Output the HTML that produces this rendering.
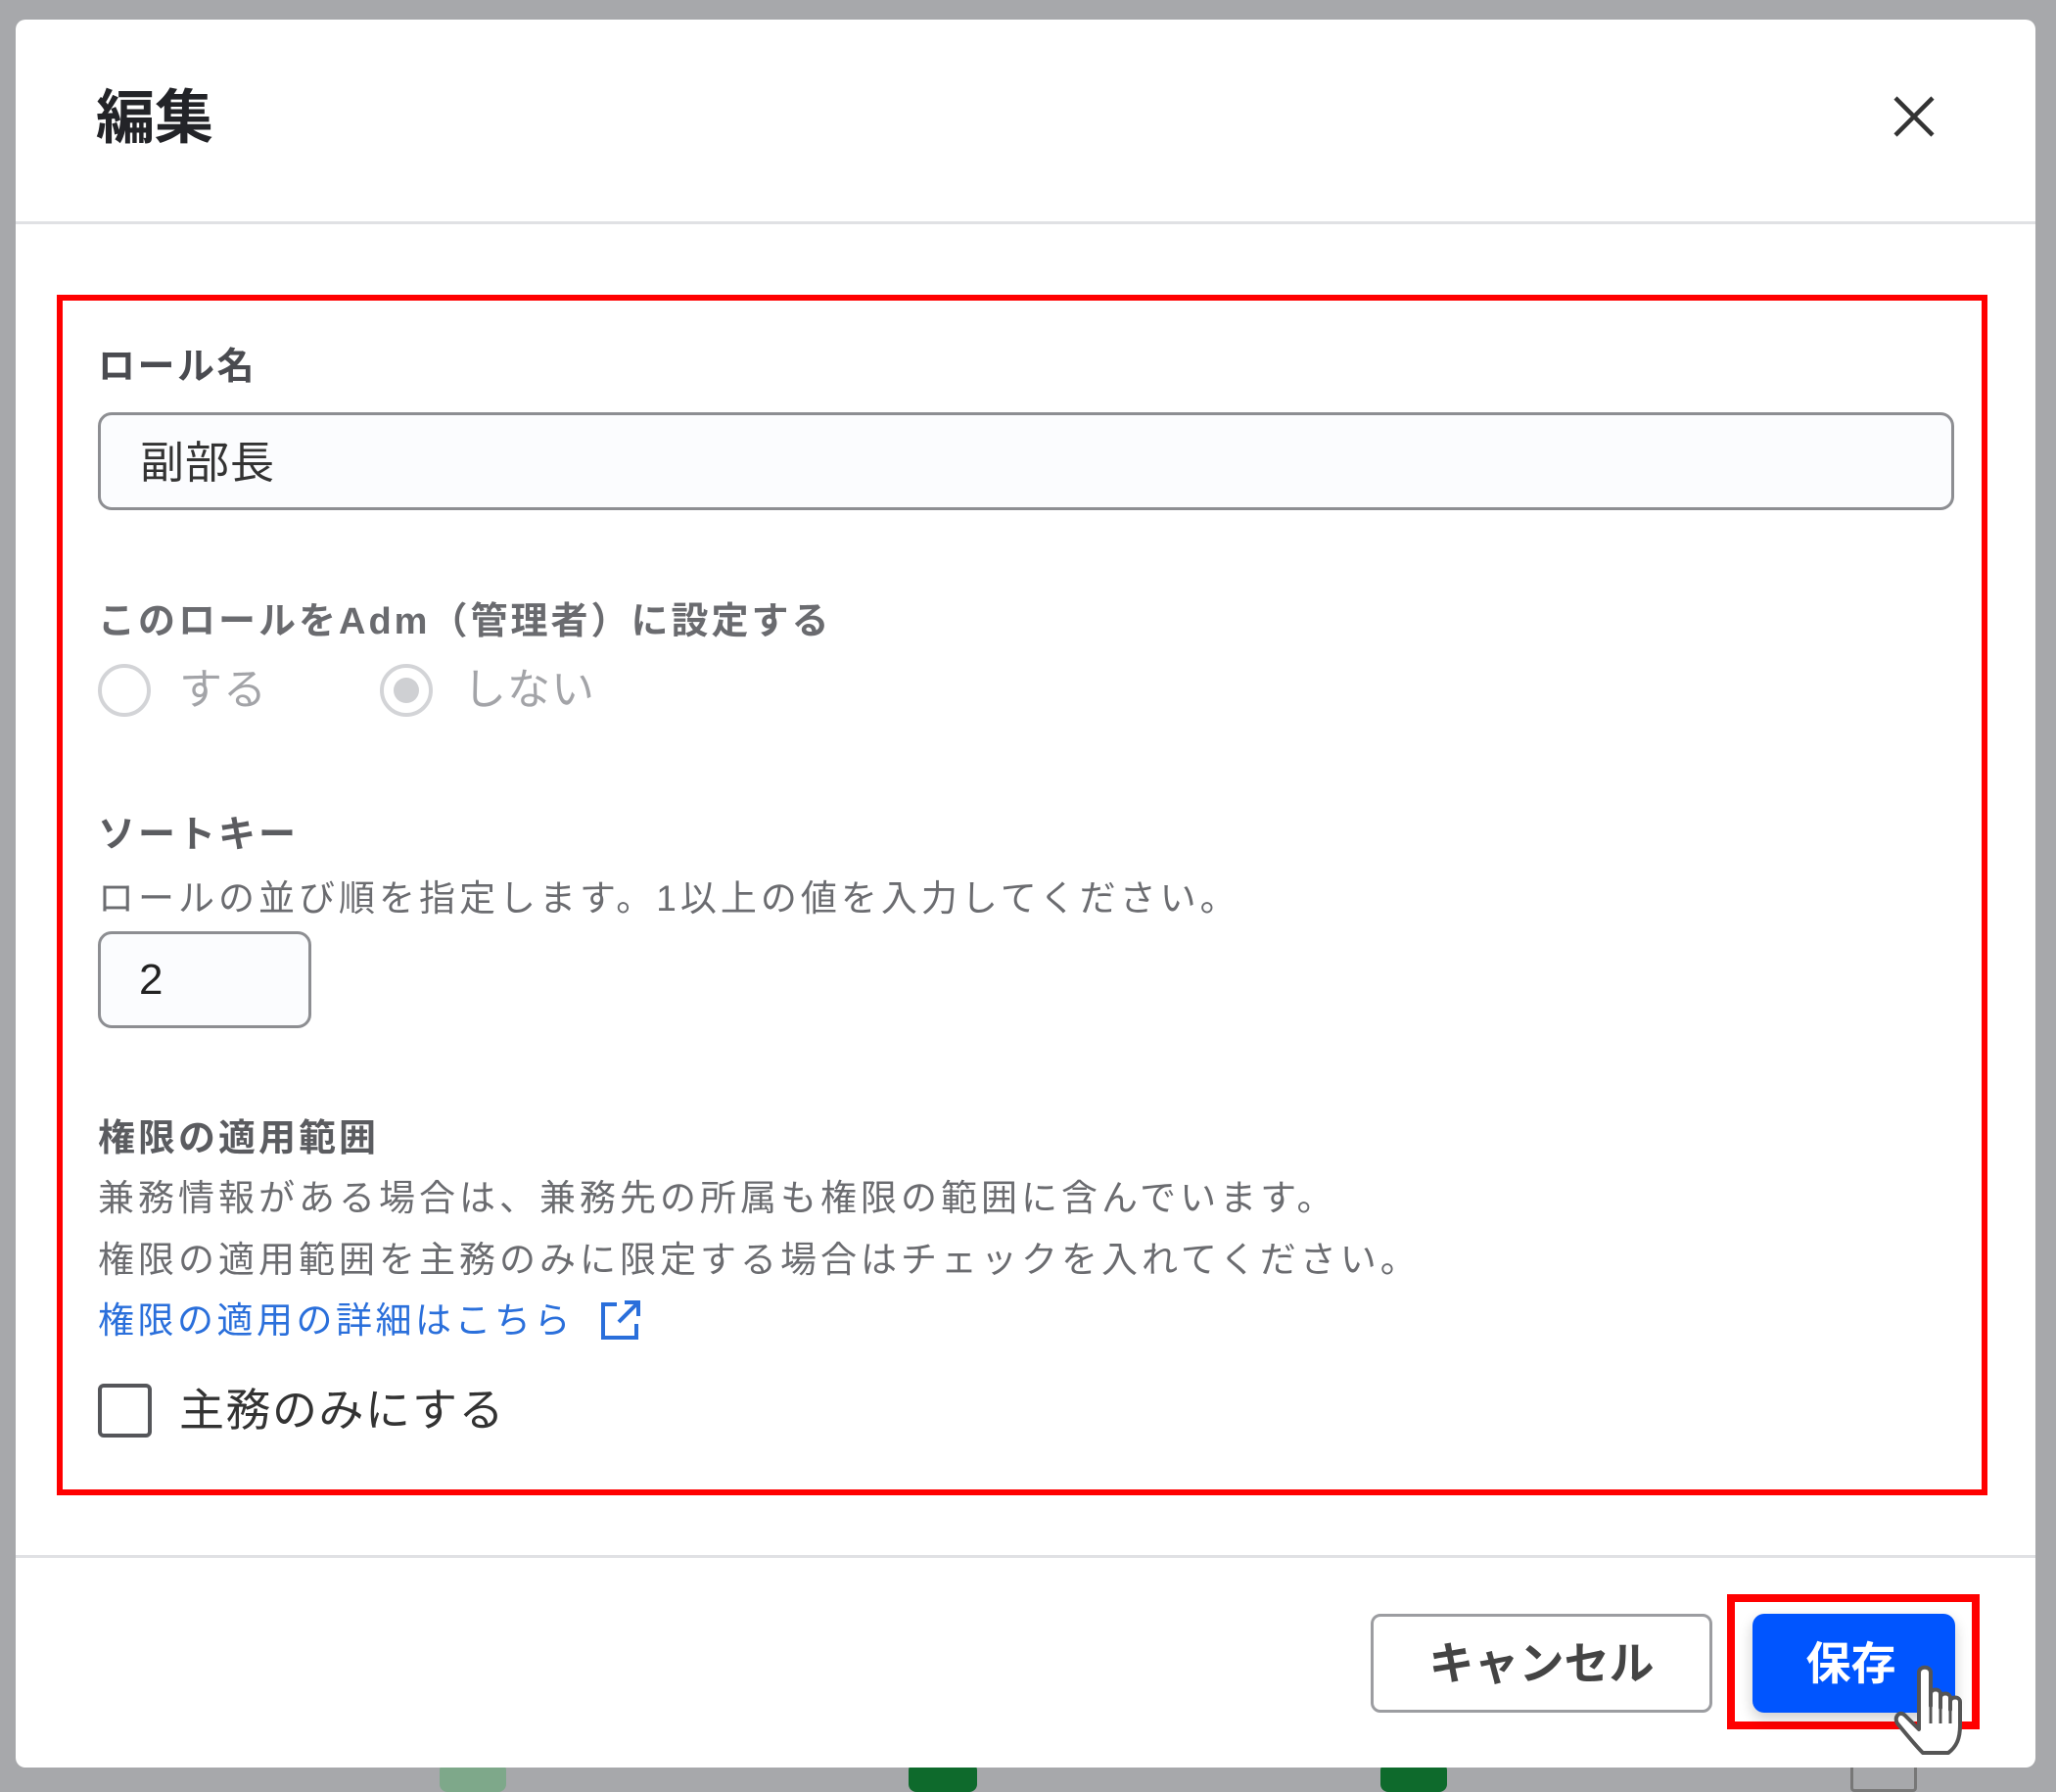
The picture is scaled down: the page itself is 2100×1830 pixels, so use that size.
<!DOCTYPE html>
<html><head><meta charset="utf-8"><style>
*{margin:0;padding:0;box-sizing:border-box}
html,body{width:2100px;height:1825px;overflow:hidden;background:#a7a8ab;font-family:"Liberation Sans","Noto Sans CJK JP",sans-serif}
.a{position:absolute}
#dlg{left:16px;top:20px;width:2063px;height:1785px;background:#fff;border-radius:10px}
.t{white-space:nowrap}
.lbl{font-size:38px;font-weight:bold;color:#4a4b50;letter-spacing:3px}
.dsc{font-size:37px;color:#6b6c70;letter-spacing:4px}
</style></head><body>
<div class="a" style="left:449px;top:1800px;width:68px;height:30px;background:#7ea88a;border-radius:8px"></div>
<div class="a" style="left:928px;top:1800px;width:70px;height:30px;background:#0e6a2c;border-radius:8px"></div>
<div class="a" style="left:1410px;top:1800px;width:68px;height:30px;background:#0e6a2c;border-radius:8px"></div>
<div class="a" style="left:1890px;top:1800px;width:68px;height:30px;border:3px solid #777;border-radius:4px"></div>
<div class="a" id="dlg"></div>
<div class="a t" style="left:98px;top:84px;font-size:60px;font-weight:bold;color:#232428;line-height:74px">編集</div>
<svg class="a" style="left:1932px;top:96px" width="46" height="46" viewBox="0 0 46 46"><path d="M4 4L42 42M42 4L4 42" stroke="#333" stroke-width="4.5" fill="none"/></svg>
<div class="a" style="left:16px;top:226px;width:2063px;height:3px;background:#e0e1e4"></div>
<div class="a" style="left:58px;top:301px;width:1972px;height:1226px;border:6px solid #f00"></div>
<div class="a t lbl" style="left:100px;top:350px;line-height:50px;letter-spacing:2.5px">ロール名</div>
<div class="a" style="left:100px;top:421px;width:1896px;height:100px;border:3px solid #8d8e92;border-radius:14px;background:#fbfcfe"></div>
<div class="a t" style="left:143px;top:446px;font-size:45px;color:#333;line-height:54px;letter-spacing:1px">副部長</div>
<div class="a t lbl" style="left:100px;top:610px;line-height:50px;color:#6a6b6f">このロールをAdm（管理者）に設定する</div>
<div class="a" style="left:100px;top:678px;width:54px;height:54px;border:4px solid #d3d4d7;border-radius:50%"></div>
<div class="a t" style="left:183px;top:678px;font-size:44px;color:#a3a4a8;line-height:54px;letter-spacing:1px">する</div>
<div class="a" style="left:388px;top:678px;width:54px;height:54px;border:4px solid #d3d4d7;border-radius:50%"></div>
<div class="a" style="left:402px;top:692px;width:26px;height:26px;background:#cfd0d3;border-radius:50%"></div>
<div class="a t" style="left:473px;top:678px;font-size:44px;color:#a3a4a8;line-height:54px;letter-spacing:1px">しない</div>
<div class="a t lbl" style="left:100px;top:828px;line-height:50px;color:#5b5c60">ソートキー</div>
<div class="a t dsc" style="left:100px;top:893px;line-height:50px">ロールの並び順を指定します。1以上の値を入力してください。</div>
<div class="a" style="left:100px;top:951px;width:218px;height:99px;border:3px solid #8d8e92;border-radius:14px;background:#fbfcfe"></div>
<div class="a t" style="left:142px;top:975px;font-size:44px;color:#222;line-height:52px">2</div>
<div class="a t lbl" style="left:100px;top:1138px;line-height:50px;color:#5b5c60">権限の適用範囲</div>
<div class="a t dsc" style="left:100px;top:1199px;line-height:50px">兼務情報がある場合は、兼務先の所属も権限の範囲に含んでいます。</div>
<div class="a t dsc" style="left:100px;top:1262px;line-height:50px">権限の適用範囲を主務のみに限定する場合はチェックを入れてください。</div>
<div class="a t" style="left:100px;top:1324px;font-size:37px;color:#2a6fdb;line-height:50px;letter-spacing:3.5px">権限の適用の詳細はこちら</div>
<svg class="a" style="left:610px;top:1324px" width="48" height="48" viewBox="0 0 48 48"><path d="M20 8H6V42H40V28M28 6H42V20M42 6L22 26" stroke="#2a6fdb" stroke-width="4" fill="none"/></svg>
<div class="a" style="left:100px;top:1413px;width:55px;height:55px;border:4px solid #55565a;border-radius:6px"></div>
<div class="a t" style="left:183px;top:1412px;font-size:46px;color:#333;line-height:56px;letter-spacing:1.5px">主務のみにする</div>
<div class="a" style="left:16px;top:1588px;width:2063px;height:3px;background:#e0e1e4"></div>
<div class="a" style="left:1400px;top:1648px;width:349px;height:101px;border:3px solid #9c9da1;border-radius:10px;background:#fff"></div>
<div class="a t" style="left:1400px;top:1672px;width:349px;text-align:center;font-size:46px;font-weight:bold;color:#444;line-height:54px">キャンセル</div>
<div class="a" style="left:1764px;top:1628px;width:258px;height:138px;border:8px solid #f00"></div>
<div class="a" style="left:1790px;top:1648px;width:207px;height:101px;background:#0055ff;border-radius:12px;box-shadow:0 6px 14px rgba(0,0,0,.2)"></div>
<div class="a t" style="left:1790px;top:1672px;width:207px;text-align:center;font-size:46px;font-weight:bold;color:#fff;line-height:54px;padding-right:6px">保存</div>
<svg class="a" style="left:1932px;top:1696px" width="90" height="100" viewBox="0 0 90 100"><path d="M28 66V12C28 5 40 5 40 12V46V34C40 28 50 28 50 34V48V38C50 32 60 32 60 38V50V42C60 36 70 36 70 42V66C70 80 66 88 58 94H32C24 86 16 76 6 64C2 58 8 50 14 56L28 70Z" fill="#fff" stroke="#555" stroke-width="4" stroke-linejoin="round"/><path d="M40 46V64M50 48V64M60 50V64" stroke="#555" stroke-width="3"/></svg>
</body></html>
